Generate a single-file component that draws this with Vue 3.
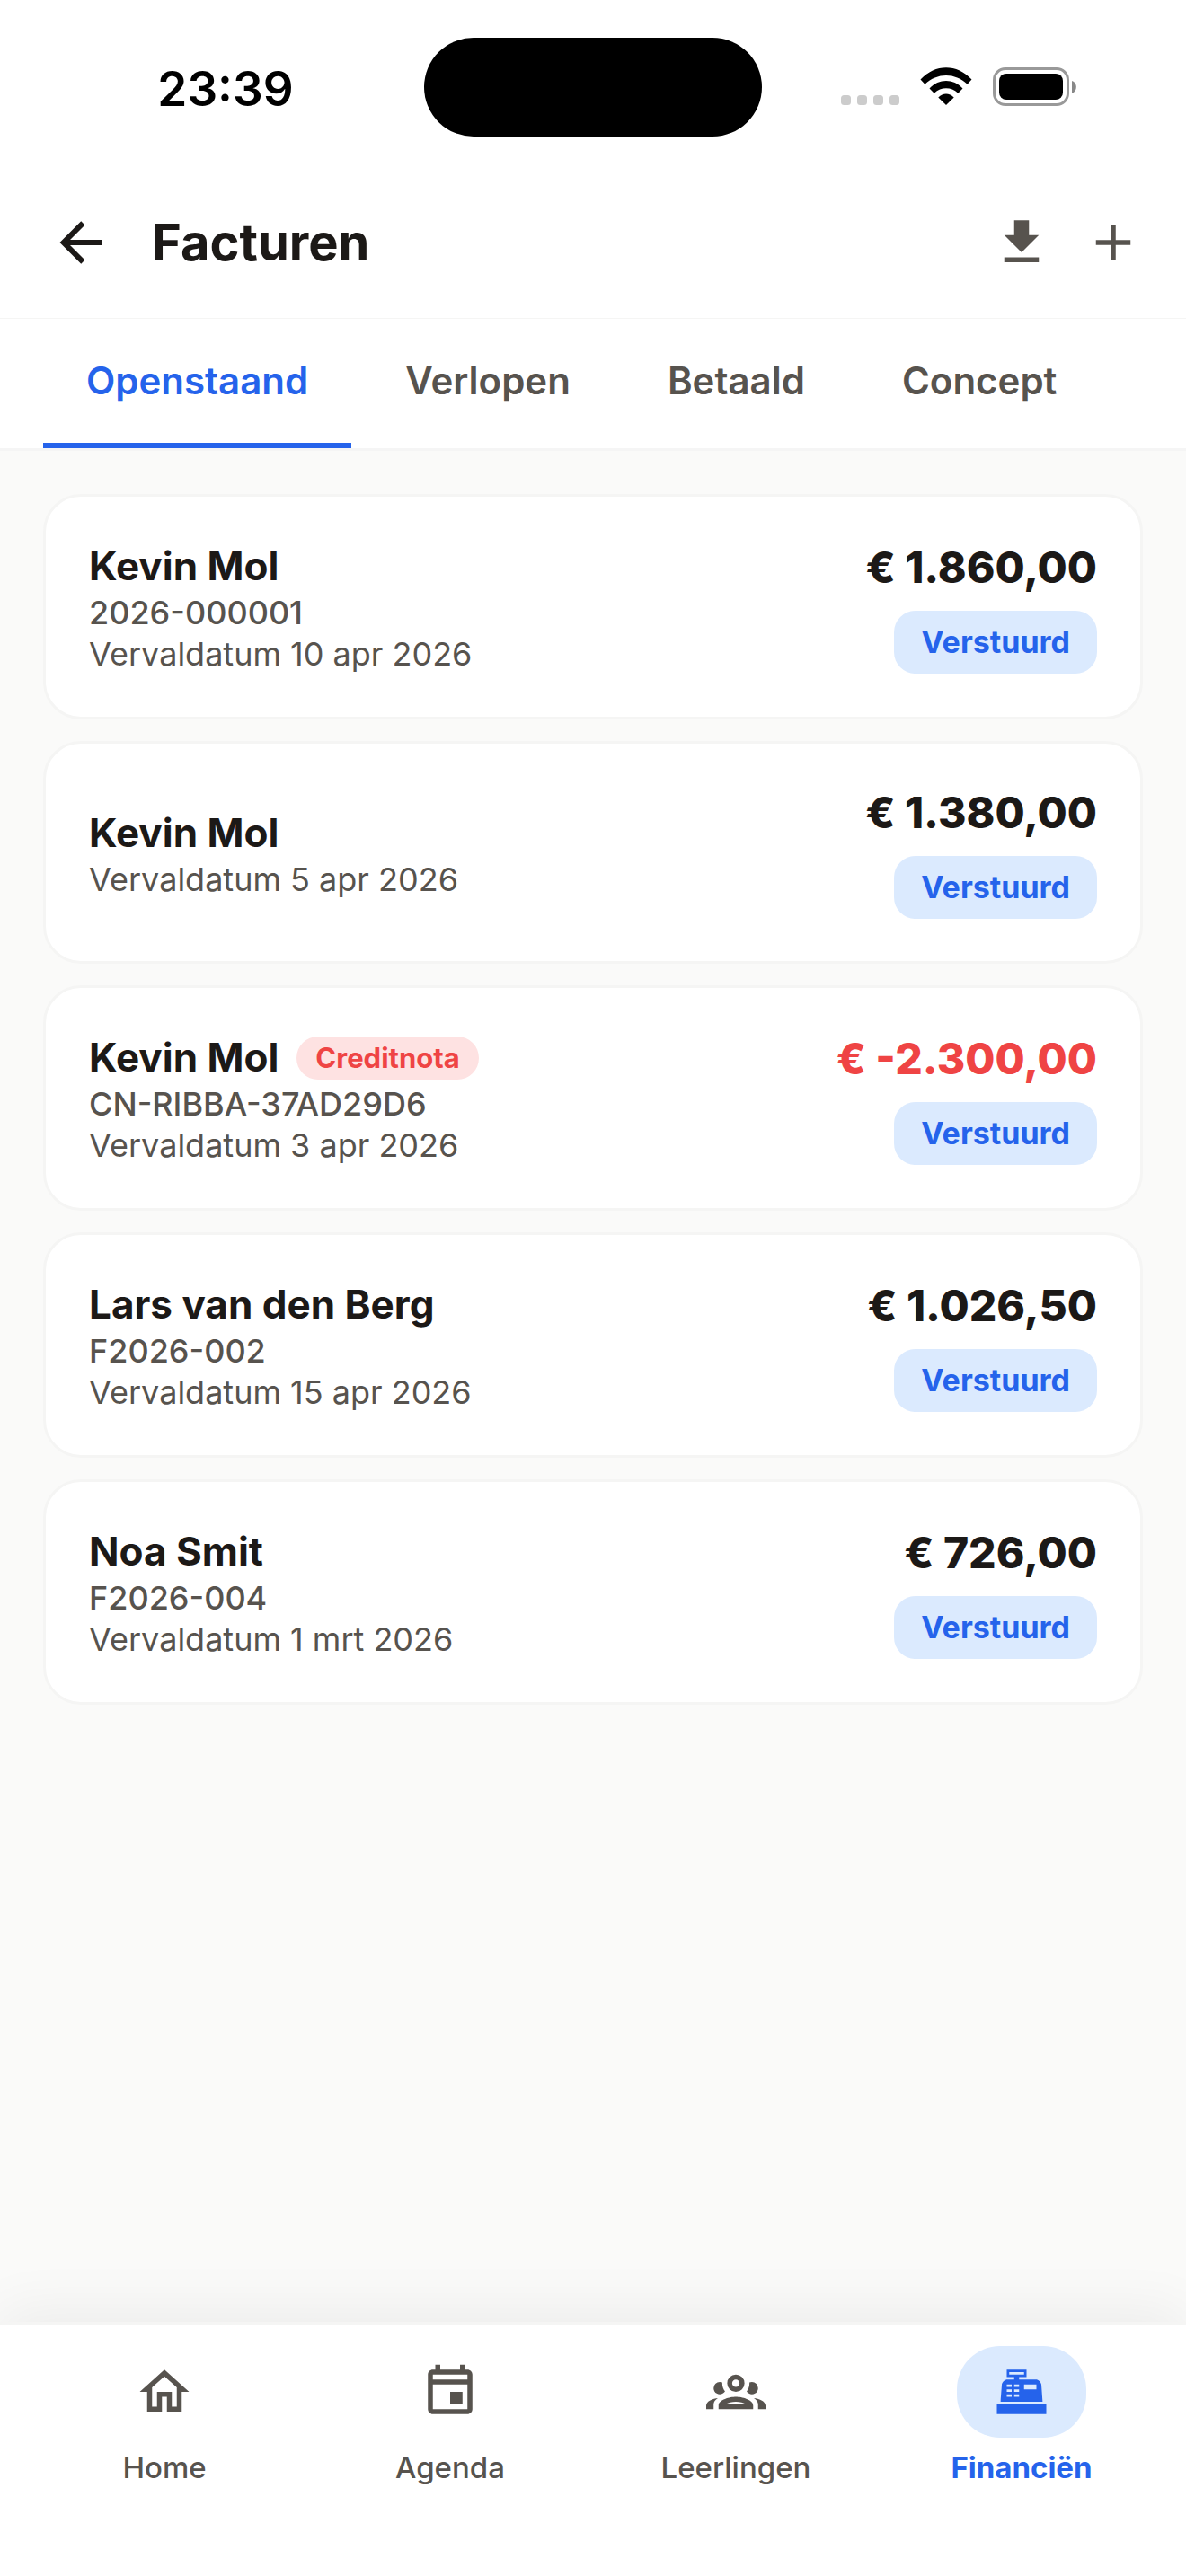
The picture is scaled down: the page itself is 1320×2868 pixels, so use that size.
<script setup>
import { ref } from 'vue'

const tabs = ['Openstaand', 'Verlopen', 'Betaald', 'Concept']
const activeTab = ref('Openstaand')

const invoices = [
  { id: 1, name: 'Kevin Mol', number: '2026-000001', due: '10 apr 2026', amount: '€ 1.860,00' },
  { id: 2, name: 'Kevin Mol', number: '', due: '5 apr 2026', amount: '€ 1.380,00' },
  { id: 3, name: 'Kevin Mol', number: 'CN-RIBBA-37AD29D6', due: '3 apr 2026', amount: '€ -2.300,00', credit: true },
  { id: 4, name: 'Lars van den Berg', number: 'F2026-002', due: '15 apr 2026', amount: '€ 1.026,50' },
  { id: 5, name: 'Noa Smit', number: 'F2026-004', due: '1 mrt 2026', amount: '€ 726,00' },
]

const navItems = [
  {
    label: 'Home',
    href: '#home',
    icon: 'M12 5.69L17 10.19V18H15V12H9V18H7V10.19L12 5.69M12 3L2 12H5V20H11V14H13V20H19V12H22',
  },
  {
    label: 'Agenda',
    href: '#agenda',
    icon: 'M19 3H18V1H16V3H8V1H6V3H5C3.89 3 3 3.9 3 5V19C3 20.1 3.9 21 5 21H19C20.1 21 21 20.1 21 19V5C21 3.9 20.1 3 19 3M19 19H5V9H19V19M19 7H5V5H19V7M12 12H17V17H12V12Z',
  },
  {
    label: 'Leerlingen',
    href: '#leerlingen',
    icon: 'M12,5A3.5,3.5 0 0,0 8.5,8.5A3.5,3.5 0 0,0 12,12A3.5,3.5 0 0,0 15.5,8.5A3.5,3.5 0 0,0 12,5M12,7A1.5,1.5 0 0,1 13.5,8.5A1.5,1.5 0 0,1 12,10A1.5,1.5 0 0,1 10.5,8.5A1.5,1.5 0 0,1 12,7M5.5,8A2.5,2.5 0 0,0 3,10.5C3,11.44 3.53,12.25 4.29,12.68C4.65,12.88 5.06,13 5.5,13C5.94,13 6.35,12.88 6.71,12.68C7.08,12.47 7.39,12.17 7.62,11.81C6.89,10.86 6.5,9.7 6.5,8.5C6.5,8.41 6.5,8.31 6.5,8.22C6.2,8.08 5.86,8 5.5,8M18.5,8C18.14,8 17.8,8.08 17.5,8.22C17.5,8.31 17.5,8.41 17.5,8.5C17.5,9.7 17.11,10.86 16.38,11.81C16.5,12 16.63,12.15 16.78,12.3C16.94,12.45 17.1,12.58 17.29,12.68C17.65,12.88 18.06,13 18.5,13C18.94,13 19.35,12.88 19.71,12.68C20.47,12.25 21,11.44 21,10.5A2.5,2.5 0 0,0 18.5,8M12,14C9.66,14 5,15.17 5,17.5V19H19V17.5C19,15.17 14.34,14 12,14M4.71,14.55C2.78,14.78 0,15.76 0,17.5V19H3V17.07C3,16.06 3.69,15.22 4.71,14.55M19.29,14.55C20.31,15.22 21,16.06 21,17.07V19H24V17.5C24,15.76 21.22,14.78 19.29,14.55M12,16C13.53,16 15.24,16.5 16.23,17H7.77C8.76,16.5 10.47,16 12,16Z',
  },
  {
    label: 'Financiën',
    href: '#financien',
    active: true,
    icon: 'M2,17H22V21H2V17M6.25,7H9V6H6V3H14V6H11V7H17.8C18.8,7 19.8,8 20,9L20.5,16H3.5C4.05,9 4,9 4,9C4.2,8 5.25,7 6.25,7M13,9V11H18V9H13M6,9V10H8V9H6M9,9V10H11V9H9M6,11V12H8V11H6M9,11V12H11V11H9M6,13V14H8V13H6M9,13V14H11V13H9M7,4V5H13V4H7Z',
  },
]
</script>

<template>
  <div class="screen">
    <div class="status">
      <span class="clock">23:39</span>
      <span class="island"></span>
      <span class="signals">
        <svg class="cellular" viewBox="0 0 65 42" aria-hidden="true">
          <rect v-for="n in 4" :key="n" :x="(n - 1) * 18" y="31" width="11" height="11" rx="3.5" />
        </svg>
        <svg class="wifi" viewBox="0 0 58 42" aria-hidden="true">
          <path d="M0.5 13.5C17 -4.2 41 -4.2 57.5 13.5L52.6 18.7C39 5.6 19 5.6 5.4 18.7Z" />
          <path d="M10.5 23.5C21 12.3 37 12.3 47.5 23.5L42.3 28.8C34.5 21.5 23.5 21.5 15.7 28.8Z" />
          <path d="M20.3 33.5C25.5 28.3 32.5 28.3 37.7 33.5L29 42Z" />
        </svg>
        <svg class="battery" viewBox="0 0 93 44" aria-hidden="true">
          <rect x="1.5" y="1.5" width="82" height="40" rx="12.5" fill="none" stroke="#999" stroke-width="3" />
          <rect x="7" y="7" width="71" height="29" rx="8" />
          <path d="M88 15C94.5 17 94.5 26.5 88 29Z" fill="#888" />
        </svg>
      </span>
    </div>

    <header class="bar">
      <button class="back" type="button" aria-label="Terug">
        <svg viewBox="0 0 24 24" aria-hidden="true">
          <path d="M20,11V13H8L13.5,18.5L12.08,19.92L4.16,12L12.08,4.08L13.5,5.5L8,11H20Z" />
        </svg>
      </button>
      <h1>Facturen</h1>
      <button class="action" type="button" aria-label="Downloaden">
        <svg viewBox="0 0 24 24" aria-hidden="true">
          <path d="M5,20H19V18H5M19,9H15V3H9V9H5L12,16L19,9Z" />
        </svg>
      </button>
      <button class="action" type="button" aria-label="Nieuwe factuur">
        <svg viewBox="0 0 24 24" aria-hidden="true">
          <path d="M19,13H13V19H11V13H5V11H11V5H13V11H19V13Z" />
        </svg>
      </button>
    </header>

    <div class="tabs" role="tablist">
      <button
        v-for="tab in tabs"
        :key="tab"
        class="tab"
        :class="{ active: tab === activeTab }"
        type="button"
        role="tab"
        :aria-selected="tab === activeTab"
        @click="activeTab = tab"
      >
        {{ tab }}
      </button>
    </div>

    <main>
      <ul class="list">
        <li v-for="invoice in invoices" :key="invoice.id" class="card">
          <div class="info">
            <div class="heading">
              <h2>{{ invoice.name }}</h2>
              <span v-if="invoice.credit" class="chip">Creditnota</span>
            </div>
            <p v-if="invoice.number" class="number">{{ invoice.number }}</p>
            <p>Vervaldatum {{ invoice.due }}</p>
          </div>
          <div class="side">
            <span class="amount" :class="{ negative: invoice.credit }">{{ invoice.amount }}</span>
            <span class="badge">Verstuurd</span>
          </div>
        </li>
      </ul>
    </main>

    <nav class="nav">
      <a
        v-for="item in navItems"
        :key="item.label"
        :href="item.href"
        class="nav-item"
        :class="{ active: item.active }"
      >
        <span class="pill">
          <svg viewBox="0 0 24 24" aria-hidden="true"><path :d="item.icon" fill-rule="evenodd" /></svg>
        </span>
        <span>{{ item.label }}</span>
      </a>
    </nav>
  </div>
</template>

<style>
body {
  margin: 0;
  background: #fafaf9;
}
</style>

<style scoped>
.screen {
  display: flex;
  flex-direction: column;
  min-height: 100vh;
  background: #fafaf9;
  color: #1c1917;
  font-family: Inter, "Liberation Sans", sans-serif;
}

h1,
h2,
p,
ul {
  margin: 0;
  padding: 0;
}

button {
  border: 0;
  padding: 0;
  background: none;
  font: inherit;
  color: inherit;
  cursor: pointer;
}

svg {
  display: block;
  fill: currentColor;
}

.status {
  display: grid;
  grid-template-columns: 1fr auto 1fr;
  align-items: center;
  padding: 42px 0 34px;
  background: #fff;
  color: #000;
}

.clock {
  justify-self: center;
  padding: 4px 0 0 30px;
  font-size: 53px;
  line-height: 64px;
  font-weight: 600;
}

.island {
  width: 376px;
  height: 110px;
  border-radius: 55px;
  background: #000;
}

.signals {
  display: flex;
  align-items: flex-start;
  justify-self: end;
  gap: 23px;
  padding-right: 122px;
}

.cellular {
  width: 65px;
  height: 42px;
  fill: #ccc;
}

.wifi {
  width: 58px;
  height: 42px;
}

.battery {
  width: 93px;
  height: 44px;
}

.bar {
  display: flex;
  align-items: center;
  padding: 33px 30px 33px 54px;
  border-bottom: 1px solid #f5f5f4;
  background: #fff;
}

.back svg {
  width: 72px;
  height: 72px;
}

h1 {
  flex: 1;
  padding-left: 43px;
  font-size: 56px;
  line-height: 72px;
  font-weight: 700;
}

.action {
  padding: 18px;
  color: #57534e;
}

.action svg {
  width: 66px;
  height: 66px;
}

.tabs {
  display: flex;
  gap: 12px;
  padding: 0 48px;
  border-bottom: 3px solid #f5f5f5;
  background: #fff;
}

.tab {
  padding: 42px 48px;
  border-bottom: 6px solid transparent;
  color: #57534e;
  font-size: 42px;
  line-height: 54px;
  font-weight: 600;
}

.tab.active {
  border-color: #2563eb;
  color: #2563eb;
}

main {
  flex: 1;
  padding: 48px;
}

.list {
  display: flex;
  flex-direction: column;
  gap: 24px;
  list-style: none;
}

.card {
  display: flex;
  align-items: center;
  justify-content: space-between;
  padding: 47px 48px;
  border: 3px solid #f5f5f4;
  border-radius: 42px;
  background: #fff;
}

.info {
  padding-top: 2px;
}

.heading {
  display: flex;
  align-items: center;
  gap: 20px;
}

h2 {
  font-size: 44px;
  line-height: 57px;
  font-weight: 700;
}

.chip {
  padding: 6px 21px;
  border-radius: 24px;
  background: #fee2e2;
  color: #ef4444;
  font-size: 31px;
  line-height: 36px;
  font-weight: 700;
}

p {
  color: #57534e;
  font-size: 36px;
  line-height: 46px;
}

.number {
  font-weight: 500;
}

.side {
  display: flex;
  flex-direction: column;
  align-items: flex-end;
  gap: 18px;
}

.amount {
  font-size: 48px;
  line-height: 60px;
  font-weight: 800;
}

.negative {
  color: #ef4444;
}

.badge {
  padding: 14px 30px;
  border-radius: 24px;
  background: #dbeafe;
  color: #2563eb;
  font-size: 34px;
  line-height: 42px;
  font-weight: 700;
}

.nav {
  display: flex;
  padding: 24px 24px 100px;
  border-top: 3px solid #f5f5f4;
  background: #fff;
  box-shadow: 0 -12px 60px rgba(0, 0, 0, 0.06);
}

.nav-item {
  display: flex;
  flex: 1;
  flex-direction: column;
  align-items: center;
  gap: 12px;
  color: #57534e;
  font-size: 33px;
  line-height: 42px;
  font-weight: 500;
  text-decoration: none;
}

.pill {
  padding: 18px 39px;
  border-radius: 48px;
}

.pill svg {
  width: 66px;
  height: 66px;
}

.nav-item.active {
  color: #2563eb;
  font-weight: 700;
}

.active .pill {
  background: #dbeafe;
}
</style>
